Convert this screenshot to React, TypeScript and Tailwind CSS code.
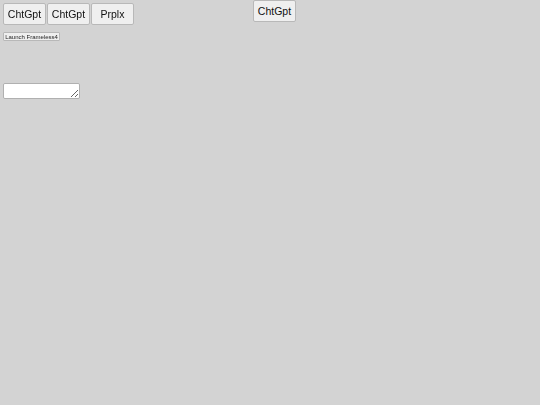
export default function App() {
  const btn =
    "h-[22px] w-[43px] border border-[#b8b8b8] bg-[#efefef] text-[10.5px] leading-none text-[#111] rounded-[2px]"
  return (
    <div className="relative min-h-[405px] w-full bg-[#d3d3d3] font-['Liberation_Sans',Arial,sans-serif]">
      <div className="flex gap-px pl-[3px] pt-[3px]">
        <button className={btn}>ChtGpt</button>
        <button className={btn}>ChtGpt</button>
        <button className={btn}>Prplx</button>
      </div>
      <button className="absolute left-[253px] top-0 h-[22px] w-[43px] border border-[#b8b8b8] bg-[#efefef] text-[10.5px] leading-none text-[#111] rounded-[2px]">
        ChtGpt
      </button>
      <div className="pl-[3px] pt-[7px]">
        <button className="flex h-[9px] w-[57px] items-center justify-center border border-[#b8b8b8] bg-[#efefef] text-[6px] leading-none text-[#222] rounded-[1px]">
          Launch Frameless4
        </button>
      </div>
      <div className="pl-[3px] pt-[42px]">
        <textarea className="block h-[16px] w-[77px] border border-[#b0b0b0] bg-white rounded-[2px]" />
      </div>
    </div>
  )
}
